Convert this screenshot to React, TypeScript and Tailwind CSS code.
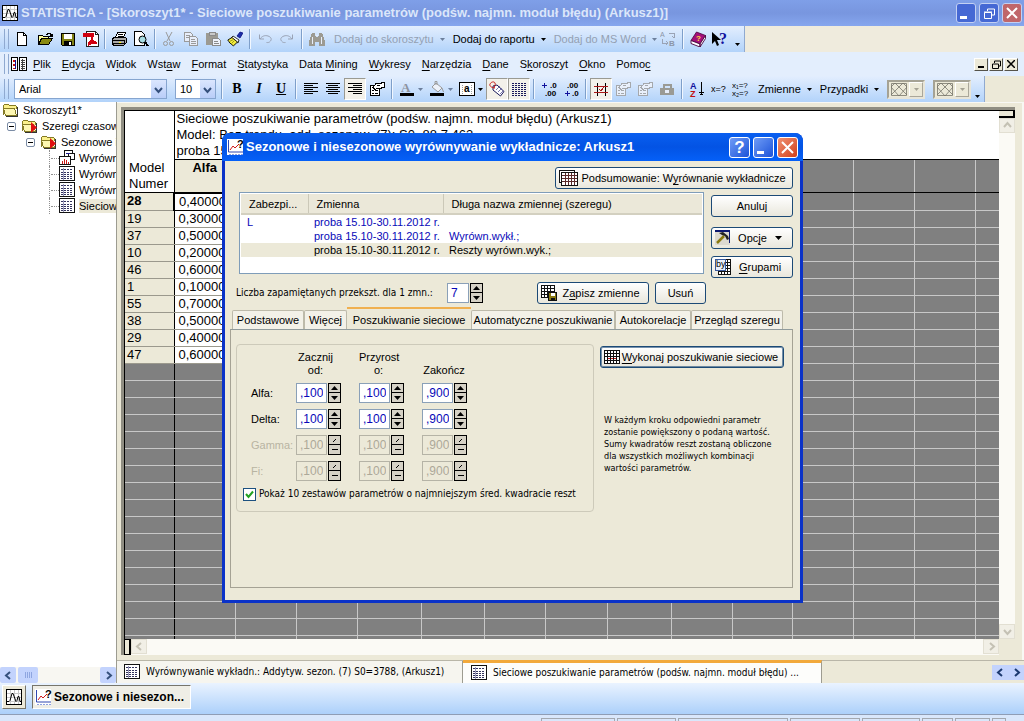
import React from "react";

type Kids = { children?: React.ReactNode };

/* Text with a Windows-style accelerator: the letter after "&" is underlined. */
function Acc({ t }: { t: string }) {
  const i = t.indexOf("&");
  if (i < 0) return <>{t}</>;
  return (
    <span className="whitespace-pre">
      {t.slice(0, i)}
      <span className="underline underline-offset-2">{t[i + 1]}</span>
      {t.slice(i + 2)}
    </span>
  );
}

function Svg({ children, s = 16 }: Kids & { s?: number }) {
  return (
    <svg width={s} height={s} viewBox="0 0 16 16" fill="none" shapeRendering="crispEdges" className="shrink-0" aria-hidden="true">
      {children}
    </svg>
  );
}

const NewIcon = () => (
  <Svg><path d="M3.5 1.5h6l3 3v10h-9z" fill="#fff" stroke="#000" /><path d="M9.5 1.5v3h3" stroke="#000" /></Svg>
);
const OpenIcon = () => (
  <Svg>
    <path d="M1.5 13.5v-9h4l1 1h5v2" fill="#ffff9c" stroke="#000" />
    <path d="M1.5 13.5l3-6h11l-4 6z" fill="#8a8a10" stroke="#000" />
    <path d="M9 3.500h1l1-1h2l1 1v1M12 5.500h3M13 4.500h2M15.500 3v3" stroke="#000" />
  </Svg>
);
const SaveIcon = () => (
  <Svg>
    <path d="M1.500 2.500h13v12h-12l-1-1z" fill="#808012" stroke="#000" />
    <path d="M4 3h8v5h-8z" fill="#fff" /><path d="M4 10h8v4h-8z" fill="#000" /><path d="M9 11h2v3h-2z" fill="#fff" />
  </Svg>
);
const PdfIcon = () => (
  <Svg>
    <path d="M3.500.500h9l3 3v12h-12z" fill="#fff" stroke="#222" />
    <path d="M0 2h11v4H0z" fill="#d00010" />
    <path d="M5 13l3-3 1-4 1 4 4 2H9l-4 2" stroke="#d00010" strokeWidth="1.500" fill="none" />
    <path d="M12.500.500v3h3" stroke="#222" />
  </Svg>
);
const PrintIcon = () => (
  <Svg>
    <path d="M4.500 6.500l2-5h8l-2 5z" fill="#fff" stroke="#000" />
    <path d="M1.500 7.500l2-1h11l1 1v4l-3 3h-10l-1-2z" fill="#a9a9a9" stroke="#000" />
    <path d="M2 9.500h11M2 12.500h11M13.500 9v4M7 3.500h5M6.500 5.500h5" stroke="#000" /><path d="M8 11h2" stroke="#ff0" />
  </Svg>
);
const PreviewIcon = () => (
  <Svg>
    <path d="M1.500.500h7l3 3v11h-10z" fill="#fff" stroke="#000" />
    <circle cx="9.500" cy="8.500" r="3.500" fill="#a8dde4" stroke="#000" shapeRendering="auto" />
    <path d="M12 11l3 4" stroke="#000" strokeWidth="2" />
  </Svg>
);
const CutIcon = () => (
  <Svg>
    <g shapeRendering="auto" stroke="#9a9a9a"><path d="M5 1l4 9M11 1L6 10" /><circle cx="4.500" cy="12.500" r="2" /><circle cx="10.500" cy="12.500" r="2" /></g>
  </Svg>
);
const CopyIcon = () => (
  <Svg>
    <path d="M1.500 1.500h6l2 2v7h-8z" fill="#e8eefa" stroke="#9a9a9a" />
    <path d="M6.500 5.500h6l2 2v7h-8z" fill="#e8eefa" stroke="#9a9a9a" />
    <path d="M3 4.500h4M3 6.500h3M8 8.500h4M8 10.500h5M8 12.500h5" stroke="#9a9a9a" />
  </Svg>
);
const PasteIcon = () => (
  <Svg>
    <path d="M1 2h12v12H1z" fill="#9c9a92" /><path d="M4 1h6v3H4z" fill="#c9c9c9" stroke="#8a8a8a" />
    <path d="M7.500 7.500h6l2 2v5h-8z" fill="#eef2fa" stroke="#8a8a8a" /><path d="M9 10.500h4M9 12.500h5" stroke="#8a8a8a" />
  </Svg>
);
const BrushIcon = () => (
  <Svg>
    <g shapeRendering="auto">
      <path d="M10 5l3-4 3 1-3 5z" fill="#1a2fa8" stroke="#00007a" strokeWidth=".7" />
      <path d="M6 5l6 4-1 3-7-5z" fill="#fff" stroke="#000" strokeWidth=".8" />
      <path d="M5 6.500L.8 9l1 1.500 1 1.500 1.500 1 2 2L10.500 11z" fill="#f3ec3d" stroke="#000" strokeWidth=".9" />
      <path d="M2.500 10.500l4-2M4.500 12.500l3-3" stroke="#8a8a10" strokeWidth=".8" />
    </g>
  </Svg>
);
const UndoIcon = ({ flip = false }: { flip?: boolean }) => (
  <Svg>
    <g stroke="#9aa3b5" transform={flip ? "matrix(-1 0 0 1 16 0)" : undefined} shapeRendering="auto">
      <path d="M2.500 3.500v4.500H7M3 8c2-3 5-4 8-3s4 3 2.500 5-3 1.500-4 1.500" />
    </g>
  </Svg>
);
const BinocIcon = () => (
  <Svg>
    <path d="M3 2h3v2l1 2h2l1-2V2h3l3 8v5h-6v-4H6v4H0v-5z" fill="#9c9a92" />
    <path d="M3.500 6v7M12.500 6v7M7 4.500h2" stroke="#e8eefa" />
  </Svg>
);
const AbIcon = () => (
  <Svg>
    <text x="0" y="6" fontSize="7" fill="#8c96a8" fontFamily="Liberation Sans">A</text>
    <text x="9" y="15" fontSize="8" fontWeight="bold" fill="#8c96a8" fontFamily="Liberation Sans">B</text>
    <path d="M2.500 8v4h5M6 10l2 2-2 2M9 2.500h5v4M12 5l2 2" stroke="#9aa3b5" />
  </Svg>
);
const BookIcon = () => (
  <Svg>
    <g shapeRendering="auto">
      <path d="M6.500 1L15.500 4.500 10 13 1 9.500z" fill="#a3107a" stroke="#4a003a" strokeWidth=".8" />
      <path d="M1 9.500v3l9 3.500v-3zM10 13l5.500-8.500v3L10 16z" fill="#fff" stroke="#4a003a" strokeWidth=".9" />
      <text x="6" y="10" fontSize="8" fontWeight="bold" fill="#ffe13a" fontFamily="Liberation Sans">?</text>
    </g>
  </Svg>
);
const WhatIcon = () => (
  <svg width="18" height="16" viewBox="0 0 18 16" aria-hidden="true">
    <path d="M1 1v12l3-3 2 5 2-1-2-5h4z" fill="#000" />
    <text x="8" y="13" fontSize="16" fontWeight="bold" fill="#10109c" fontFamily="Liberation Serif">?</text>
  </svg>
);
const AlignIcon = ({ k }: { k: "l" | "c" | "r" }) => (
  <Svg>
    <path
      d={
        k === "l"
          ? "M1 2.500h14M1 4.500h9M1 6.500h14M1 8.500h9M1 10.500h14M1 12.500h9"
          : k === "c"
            ? "M1 2.500h14M3 4.500h10M1 6.500h14M3 8.500h10M1 10.500h14M3 12.500h10"
            : "M1 2.500h14M6 4.500h9M1 6.500h14M6 8.500h9M1 10.500h14M6 12.500h9"
      }
      stroke="#000"
    />
  </Svg>
);
const PropsIcon = ({ c = "#000", f = "#fff" }: { c?: string; f?: string }) => (
  <Svg>
    <path d="M1.500 4.500h9v10h-9z" fill={f} stroke={c} />
    <path d="M3 9.500h2M6 9.500h3M3 12.500h2M6 12.500h3" stroke={c} />
    <path d="M4 6.500l3-4h5l1-1h2v5h-2l-1 1H8l-2 1z" fill={f} stroke={c} />
    <path d="M8 4.500h3" stroke={c} />
  </Svg>
);
const FontColorIcon = () => (
  <Svg><text x="2" y="11" fontSize="13" fontWeight="bold" fill="#8d939f" fontFamily="Liberation Serif">A</text><path d="M1 12h14v3H1z" fill="#000" /></Svg>
);
const FillIcon = () => (
  <Svg>
    <g shapeRendering="auto"><path d="M3 6l4-4 6 5-4 4z" fill="#eef2fa" stroke="#9a9a9a" /><path d="M6 4V.500h2V4M13 7l1.500 4" stroke="#9a9a9a" /></g>
    <path d="M1 12h14v3H1z" fill="#000" />
  </Svg>
);
const BoxAIcon = () => (
  <Svg>
    <path d="M.500 1.500h15v13H.500z" fill="#fff" stroke="#000" /><path d="M3.500 3.500v9M12.500 3.500v9" stroke="#999" strokeDasharray="1 1" />
    <text x="5" y="11" fontSize="10" fontWeight="bold" fill="#000" fontFamily="Liberation Sans">a</text>
  </Svg>
);
const TagIcon = () => (
  <Svg>
    <g shapeRendering="auto">
      <path d="M4 5l4-1 7 6.500-3.500 4.500L4 9z" fill="#fff" stroke="#1a1a5c" />
      <path d="M7 9l4-4M9 11l4-4M11 13l3.500-3.500" stroke="#7a78b0" />
      <path d="M6 7C3 7 0 5 1 3s4-3 5-1-1 4-1 5" stroke="#c81e1e" />
    </g>
  </Svg>
);
const DotsIcon = () => (
  <Svg><path d="M1 2.500h14M1 4.500h14M1 6.500h14M1 8.500h14M1 10.500h14M1 12.500h14M1 14.500h14" stroke="#1a1a5c" strokeDasharray="2 1" /></Svg>
);
const DecIcon = ({ add }: { add: boolean }) => (
  <Svg>
    <g fill="#000" fontFamily="Liberation Sans" fontWeight="bold" fontSize="8">
      <text x={add ? 9 : 4} y="7">{add ? ".0" : ".00"}</text>
      <text x={add ? 4 : 9} y="15">{add ? ".00" : ".0"}</text>
    </g>
    <path d={add ? "M1 4.500h5M3.500 2v5" : "M2 12.500h5M4.500 10v5"} stroke="#10109c" />
  </Svg>
);
const CropIcon = () => (
  <Svg>
    <path d="M4.500 2v13M12.500 2v13" stroke="#000" /><path d="M1 5.500h14M1 11.500h14" stroke="#a81818" />
    <path d="M6 8l2 2 3-4" stroke="#a81818" />
  </Svg>
);
const LockIcon = () => (
  <Svg><path d="M4.500 7V3.500h7V7" stroke="#9a9a94" strokeWidth="2" /><path d="M1 7h14v7H1z" fill="#9a9a94" /><circle cx="8" cy="10.500" r="2" fill="#e8eefa" /></Svg>
);
const SortIcon = () => (
  <Svg>
    <g fontFamily="Liberation Sans" fontWeight="bold" fontSize="9"><text x="1" y="8" fill="#10109c">A</text><text x="1" y="16" fill="#c01010">Z</text></g>
    <path d="M12.500 1v13M10 11.500h5M11 13.500h3" stroke="#000" />
  </Svg>
);
const XqIcon = () => (
  <Svg><text x="0" y="11" fontSize="9" fill="#000" fontFamily="Liberation Sans">x=?</text></Svg>
);
const XxIcon = () => (
  <svg width="18" height="16" viewBox="0 0 18 16" aria-hidden="true">
    <g fontSize="8" fill="#000" fontFamily="Liberation Sans"><text x="0" y="7">x₁=?</text><text x="0" y="15">x₂=?</text></g>
  </svg>
);
const PlotIcon = () => (
  <Svg>
    <path d="M.500.500h15v15H.500z" fill="#fff" stroke="#000" />
    <path d="M4.500 1v14M8.500 1v14M12.500 1v14M1 4.500h14M1 8.500h14M1 12.500h14" stroke="#c9c9c9" />
    <path d="M1 12.500h2l1-1 2-7h1l3 8 1-1 1-4h1l1 5h2" stroke="#000" shapeRendering="auto" />
  </Svg>
);
const WorkbookIcon = () => (
  <Svg>
    <path d="M.500 1.500h6v13h-6zM8.500 1.500h7v13h-7z" fill="#fff" stroke="#000" />
    <path d="M2 4h2v2H2zM2 8h2v2H2zM2 12h2v1H2z" fill="#c01010" /><path d="M4.500 4v9" stroke="#10109c" />
    <path d="M10 4.500h4M10 6.500h4M10 8.500h4M10 10.500h4M10 12.500h4" stroke="#444" /><path d="M11.500 3v11" stroke="#444" />
  </Svg>
);
const FolderIcon = ({ mark = false }: { mark?: boolean }) => (
  <Svg>
    <path d="M.500 12.500v-9l1-1h4l1 1h6l1 1v2" fill="#fbf08b" stroke="#857b25" />
    <path d="M2.500 13.500l-2-7h11l2 7z" fill="#fdf7b2" stroke="#857b25" />
    <path d="M14.500 5v9H3" stroke="#333" />
    {mark && <path d="M9 4l6 5.500L9 15z" fill="#e01010" shapeRendering="auto" />}
  </Svg>
);
const SheetIcon = () => (
  <Svg>
    <path d="M.500.500h15v14H.500z" fill="#fff" stroke="#111" />
    <path d="M2 3.500h12M2 6.500h12M2 8.500h12M2 10.500h12M2 12.500h12" stroke="#34345e" strokeDasharray="2 1" /><path d="M4.500 2v12" stroke="#99b" />
  </Svg>
);
const ChartsIcon = () => (
  <Svg>
    <path d="M5.500.500h8v6h-8z" fill="#fff" stroke="#111" /><path d="M9.500 3.500h6v6h-6z" fill="#fff" stroke="#111" />
    <path d="M.500 6.500h11v8H.500z" fill="#fff" stroke="#111" />
    <path d="M3.500 11v3M5.500 9v5M7.500 10v4M9.500 12v2" stroke="#c81818" /><path d="M7 3.500h4" stroke="#18188c" />
  </Svg>
);
const TrendIcon = () => (
  <svg width="18" height="17" viewBox="0 0 18 17" className="shrink-0" aria-hidden="true">
    <path d="M0 0h16v16H0z" fill="#fff" /><path d="M1.500 1v12H16" stroke="#3048b0" fill="none" />
    <path d="M3 11l3-4 2 2 4-4" stroke="#d01818" fill="none" /><path d="M2 15.500h14" stroke="#8fa2e0" strokeDasharray="2 1" />
    <text x="10" y="9" fontSize="11" fontWeight="bold" fill="#000" fontFamily="Liberation Sans">?</text>
  </svg>
);
const GridIcon = () => (
  <Svg>
    <path d="M.500 1.500h15v13H.500z" fill="#fff" stroke="#111" />
    <path d="M3.500 1v14M6.500 1v14M9.500 1v14M12.500 1v14M0 4.500h16M0 7.500h16M0 11.500h16" stroke="#111" />
    <path d="M4 9.500h8" stroke="#c01818" strokeDasharray="2 1" />
  </Svg>
);
const StackGridIcon = () => (
  <svg width="19" height="16" viewBox="0 0 19 16" fill="none" shapeRendering="crispEdges" className="shrink-0" aria-hidden="true">
    <path d="M.500.500h15v12H.500z" fill="#fff" stroke="#111" /><path d="M2.500 2.500h16v13h-16z" fill="#fff" stroke="#111" />
    <path d="M6.500 3v12M9.500 3v12M12.500 3v12M15.500 3v12M3 5.500h15M3 8.500h15M3 11.500h15" stroke="#5a2a2a" />
  </svg>
);
const SaveGridIcon = () => (
  <Svg>
    <path d="M.500.500h13v12H.500z" fill="#fff" stroke="#111" />
    <path d="M3.500 1v12M6.500 1v12M9.500 1v12M0 3.500h13M0 6.500h13M0 9.500h13" stroke="#111" />
    <path d="M7.500 7.500h8v8h-8z" fill="#8a7a10" stroke="#111" /><path d="M10 8h4v3h-4z" fill="#fff" /><path d="M10 13h4v3h-4z" fill="#111" />
  </Svg>
);
const HammerIcon = () => (
  <Svg>
    <path d="M0 0h15v15H0z" fill="#dcd9d0" /><path d="M0 0h15v2H0zM14 0h1v13h-1z" fill="#0c1770" />
    <g shapeRendering="auto"><path d="M2 13l7-7" stroke="#8a7a10" strokeWidth="2.500" /><path d="M4 3l4-1 5 4 1 3-2 1-2-4-3-1z" fill="#222" /></g>
  </Svg>
);
const ByIcon = () => (
  <Svg>
    <path d="M3.500 0.500h12v15h-12z" fill="#fff" stroke="#111" />
    <path d="M12.500 0v16M3 12.500h13M6.500 11v5M9.500 11v5M11 3.500h5M11 6.500h5M11 9.500h5" stroke="#111" />
    <path d="M.500.500h10v11H.500z" fill="#e9f0fc" stroke="#3a5a9c" />
    <text x="1" y="8" fontSize="9" fill="#000" fontFamily="Liberation Sans">by</text>
  </Svg>
);

function Tool({ label, on = false, off = false, children }: Kids & { label: string; on?: boolean; off?: boolean }) {
  return (
    <button
      aria-label={label}
      disabled={off}
      className={`flex h-[22px] w-[22px] shrink-0 items-center justify-center ${on ? "border border-[#9a9a92] border-r-white border-b-white bg-[#f3f1ea]" : ""}`}
    >
      {children}
    </button>
  );
}
const Sep = ({ wide = false }: { wide?: boolean }) => (
  <span className={`h-5 w-0.5 shrink-0 border-l border-l-[#7e9fca] bg-[#f1f7ff] ${wide ? "mx-[3px]" : "mx-0.5"}`} />
);
const Grip = () => <span className="mr-0.5 ml-1 h-5 w-[5px] shrink-0 border-x border-[#8fa9d0]" />;
const Down = ({ c = "#000" }: { c?: string }) => (
  <svg width="5" height="3" viewBox="0 0 5 3" className="shrink-0" aria-hidden="true"><path d="M0 0h5L2.500 3z" fill={c} /></svg>
);
function TextTool({ t, off = false }: { t: string; off?: boolean }) {
  return (
    <button disabled={off} className={`flex shrink-0 items-center gap-1.5 whitespace-nowrap ${off ? "text-[#94a0b2]" : ""}`}>
      {t}
      <Down c={off ? "#6c7f9c" : "#000"} />
    </button>
  );
}
const bar = "flex items-center bg-linear-to-b from-[#e3eefe] to-[#b2d3fa]";

function Chevron({ dir, c = "#35507c" }: { dir: "l" | "r" | "u" | "d"; c?: string }) {
  const d = { l: "M6 1L2 4.500 6 8", r: "M3 1l4 3.500L3 8", u: "M1 6l3.500-4L8 6", d: "M1 3l3.500 4L8 3" }[dir];
  return <svg width="9" height="9" viewBox="0 0 9 9" aria-hidden="true"><path d={d} fill="none" stroke={c} strokeWidth="2" /></svg>;
}

function Combo({ label, value, cls }: { label: string; value: string; cls: string }) {
  return (
    <div className={`flex h-5 shrink-0 items-center border border-[#86a5cf] bg-white ${cls}`}>
      <select aria-label={label} className="min-w-0 flex-1 appearance-none bg-white pl-1 text-[11px] outline-none">
        <option>{value}</option>
      </select>
      <span className="flex h-[18px] w-[15px] items-center justify-center bg-linear-to-b from-[#dbe6fe] to-[#b9cdf8]"><Chevron dir="d" /></span>
    </div>
  );
}

function PatternCombo({ label }: { label: string }) {
  return (
    <button aria-label={label} disabled className="flex h-[19px] w-[38px] shrink-0 items-center justify-between border-2 border-[#a5a294] border-r-[#e8e5d8] border-b-[#e8e5d8] bg-[#ece9d8] pl-0.5">
      <svg width="16" height="13" viewBox="0 0 16 13" fill="none" stroke="#77756b" aria-hidden="true">
        <path d="M.500.500h15v12H.500zM4 0l12 12M12 0L0 12M0 4l8 9M16 4l-8 9M0 4l4-4M16 4l-4-4" strokeWidth=".8" />
      </svg>
      <span className="flex h-[15px] w-[14px] items-center justify-center border border-[#fff] border-r-[#aaa79a] border-b-[#aaa79a]"><Down c="#a5a294" /></span>
    </button>
  );
}

const menus = ["&Plik", "&Edycja", "W&idok", "Wst&aw", "&Format", "&Statystyka", "Data &Mining", "&Wykresy", "&Narzędzia", "&Dane", "S&koroszyt", "&Okno", "Pomo&c"];

const modelRows: [string, string][] = [
  ["28", "0,400000"], ["19", "0,300000"], ["37", "0,500000"], ["10", "0,200000"], ["46", "0,600000"],
  ["1", "0,100000"], ["55", "0,700000"], ["38", "0,500000"], ["29", "0,400000"], ["47", "0,600000"],
];
const colWidths = [49, 61, 61, 61, 64, 63, 61, 62, 64, 61, 60, 61, 61, 61, 61];
const spare = colWidths.slice(2);

function Sheet() {
  return (
    <table className="w-[911px] shrink-0 table-fixed border-collapse text-[13px] leading-4">
      <colgroup>{colWidths.map((w, i) => <col key={i} style={{ width: w }} />)}</colgroup>
      <thead className="text-left font-normal">
        <tr className="h-[48px]">
          <th rowSpan={2} className="border-r border-b border-black bg-white p-0 pl-1 align-bottom font-normal">Model<br />Numer</th>
          <th colSpan={14} className="border-b border-black bg-white p-0 pl-0.5 align-top font-normal whitespace-nowrap">
            Sieciowe poszukiwanie parametrów (podśw. najmn. moduł błędu) (Arkusz1)<br />
            Model: Bez trendu, add. sezonow. (7); S0=88 7,463<br />
            proba 15.10-30.11.2012 r.
          </th>
        </tr>
        <tr className="h-[33px]">
          <th className="border-b border-black bg-[#ece9d8] text-center align-top font-bold">Alfa</th>
          {spare.map((_, i) => <th key={i} className="border-r border-b border-r-[#c8c8c8] border-b-black" />)}
        </tr>
      </thead>
      <tbody>
        {modelRows.map(([n, v], r) => (
          <tr key={n} className="h-[17px]">
            <th className={`border-r border-b border-r-black border-b-[#9b998d] bg-[#ece9d8] p-0 pl-0.5 text-left ${r ? "font-normal" : "font-bold"}`}>{n}</th>
            <td className={`border-b bg-white p-0 pl-1 ${r ? "border-[#9b998d]" : "border-2 border-black"}`}>{v}</td>
            {spare.map((_, i) => <td key={i} className="border-r border-b border-[#c8c8c8] p-0" />)}
          </tr>
        ))}
        {Array.from({ length: 17 }, (_, r) => (
          <tr key={r} className="h-[17px]">
            <td className="border-r border-b border-r-black border-b-[#c8c8c8] p-0" />
            {colWidths.slice(1).map((_, i) => <td key={i} className="border-r border-b border-[#c8c8c8] p-0" />)}
          </tr>
        ))}
      </tbody>
    </table>
  );
}

function Fold() {
  return <span className="flex h-[9px] w-[9px] shrink-0 items-center justify-center rounded-xs border border-[#7b8ca5] bg-white"><span className="h-px w-[5px] bg-black" /></span>;
}
function Leaf({ t, icon, sel = false }: { t: string; icon: React.ReactNode; sel?: boolean }) {
  return (
    <li className="flex h-4 items-center gap-1">
      <span className="flex items-center self-stretch border-l border-dotted border-[#909090] pl-px"><span className="w-2 border-t border-dotted border-[#909090]" />{icon}</span>
      <span className={sel ? "bg-[#ece9d8]" : ""}>{t}</span>
    </li>
  );
}

function Tree() {
  return (
    <nav aria-label="Skoroszyt" className="flex w-[117px] shrink-0 flex-col overflow-hidden border-r border-[#9d9c91] bg-white">
      <ul className="flex-1 overflow-hidden whitespace-nowrap">
        <li className="flex h-4 items-center gap-1 pl-[3px]"><FolderIcon />Skoroszyt1*</li>
        <li className="flex h-4 items-center gap-1 pl-[7px]"><Fold /><span className="-ml-0.5 w-1 border-t border-dotted border-[#909090]" /><FolderIcon mark />Szeregi czasowe</li>
        <li className="flex h-4 items-center gap-1 pl-[26px]"><Fold /><span className="-ml-0.5 w-1 border-t border-dotted border-[#909090]" /><FolderIcon mark />Sezonowe i niesezonowe</li>
        <li className="pl-[49px]">
          <ul>
            <Leaf t="Wyrównywanie" icon={<ChartsIcon />} />
            <Leaf t="Wyrównywanie" icon={<SheetIcon />} />
            <Leaf t="Wyrównywanie" icon={<SheetIcon />} />
            <Leaf t="Sieciowe" icon={<SheetIcon />} sel />
          </ul>
        </li>
      </ul>
      <div className="flex h-4 items-center justify-between bg-[#f8f7f2]">
        <div className="flex">
          <button aria-label="Przewiń w lewo" className="flex h-4 w-4 items-center justify-center rounded-xs bg-[#c3d3fd]"><Chevron dir="l" /></button>
          <span className="ml-0.5 flex h-4 w-5 items-center justify-center gap-px rounded-xs bg-[#c3d3fd]">
            {[0, 1, 2, 3].map((i) => <span key={i} className="h-1.5 w-px bg-[#8fa6e0]" />)}
          </span>
        </div>
        <button aria-label="Przewiń w prawo" className="flex h-4 w-4 items-center justify-center rounded-xs bg-[#c3d3fd]"><Chevron dir="r" /></button>
      </div>
    </nav>
  );
}

function Btn({ icon, children, cls = "" }: Kids & { icon?: React.ReactNode; cls?: string }) {
  return (
    <button className={`flex h-[22px] shrink-0 items-center rounded-[3px] border border-[#1c4a76] bg-linear-to-b from-white to-[#e9e7dc] px-[3px] whitespace-nowrap ${cls}`}>
      {icon}
      <span className="flex-1 text-center">{children}</span>
    </button>
  );
}

function Spin({ label, value, off = false, w = "w-[31px]", id }: { label: string; value: string; off?: boolean; w?: string; id?: string }) {
  const b = "flex h-2.5 w-[13px] items-center justify-center border border-black bg-[#d6d2c6]";
  return (
    <div className="flex items-center gap-px">
      <input
        id={id}
        aria-label={id ? undefined : label}
        defaultValue={value}
        disabled={off}
        className={`h-5 border px-[3px] text-[12px] ${w} ${off ? "border-[#b5b3a6] bg-[#ece9d8] text-[#aca899]" : "border-[#8aa0b8] bg-white text-[#0808b8]"}`}
      />
      <div className="flex flex-col">
        <button aria-label={`${label} więcej`} disabled={off} className={b}>
          <svg width="7" height="4" viewBox="0 0 7 4" aria-hidden="true"><path d={off ? "M2 4l3-3" : "M0 4h7L3.500 0z"} fill="#000" stroke={off ? "#000" : "none"} /></svg>
        </button>
        <button aria-label={`${label} mniej`} disabled={off} className={`${b} border-t-0`}>
          <svg width="7" height="4" viewBox="0 0 7 4" aria-hidden="true"><path d={off ? "M1 1.500h6" : "M0 0h7L3.500 4z"} fill="#000" stroke={off ? "#000" : "none"} /></svg>
        </button>
      </div>
    </div>
  );
}

const tabs: [string, string][] = [
  ["Podstawowe", "w-[72px]"], ["Więcej", "w-[43px]"], ["Poszukiwanie sieciowe", "w-[124px]"],
  ["Automatyczne poszukiwanie", "w-[144px]"], ["Autokorelacje", "w-[76px]"], ["Przegląd szeregu", "w-[92px]"],
];
const params: [string, boolean][] = [["Alfa:", false], ["Delta:", false], ["Gamma:", true], ["Fi:", true]];

function Dialog() {
  const cap = "flex h-[21px] w-[21px] items-center justify-center rounded-[3px] border border-white";
  return (
    <section role="dialog" aria-label="Sezonowe i niesezonowe wyrównywanie wykładnicze" className="absolute top-[133px] left-[222px] flex h-[470px] w-[581px] flex-col rounded-t-lg bg-[#0a32c8] p-[3px] pt-0">
      <header className="-mx-[3px] flex h-7 items-center gap-px rounded-t-lg bg-linear-to-b from-[#0a5ff0] via-[#0353e4] to-[#0560f8] px-[5px] text-white">
        <TrendIcon />
        <h2 className="flex-1 text-[13px] font-bold whitespace-nowrap">Sezonowe i niesezonowe wyrównywanie wykładnicze: Arkusz1</h2>
        <div className="flex gap-[3px]">
          <button aria-label="Pomoc" className={`${cap} bg-linear-to-br from-[#6f9bf6] to-[#1d51d8] text-[17px] leading-none font-bold`}>?</button>
          <button aria-label="Minimalizuj" className={`${cap} bg-linear-to-br from-[#6f9bf6] to-[#1d51d8]`}><span className="mt-2.5 mr-1.5 h-[3px] w-[7px] bg-white" /></button>
          <button aria-label="Zamknij" className={`${cap} bg-linear-to-br from-[#f09070] to-[#d03c14]`}>
            <svg width="13" height="13" viewBox="0 0 13 13" aria-hidden="true"><path d="M1 1l11 11M12 1L1 12" stroke="#fff" strokeWidth="2" /></svg>
          </button>
        </div>
      </header>
      <div className="flex flex-1 flex-col bg-[#ece9d8] px-[7px] pt-1.5">
        <div className="flex justify-end"><Btn icon={<StackGridIcon />} cls="w-[238px]"><Acc t="Podsumowanie: W&yrównanie wykładnicze" /></Btn></div>
        <div className="mt-[3px] flex gap-[7px] pl-[7px]">
          <div className="h-[82px] flex-1 border border-[#7f9db9] bg-white px-px pt-px">
            <table className="w-full table-fixed border-collapse text-left leading-[14px] whitespace-nowrap">
              <colgroup><col className="w-[67px]" /><col className="w-[135px]" /><col /></colgroup>
              <thead className="bg-[#ebe8d9]">
                <tr className="h-5 border-b-2 border-[#d3d0c0]">
                  <th className="border-r border-[#cbc8b8] p-0 pl-2 font-normal">Zabezpi...</th>
                  <th className="border-r border-[#cbc8b8] p-0 pl-2 font-normal">Zmienna</th>
                  <th className="p-0 pl-2 font-normal">Długa nazwa zmiennej (szeregu)</th>
                </tr>
              </thead>
              <tbody>
                <tr className="text-[#0808b8]"><td className="p-0 pl-1.5">L</td><td className="p-0 pl-1.5">proba 15.10-30.11.2012 r.</td><td /></tr>
                <tr className="text-[#0808b8]"><td /><td className="p-0 pl-1.5">proba 15.10-30.11.2012 r.</td><td className="p-0 pl-1.5">Wyrówn.wykł.;</td></tr>
                <tr className="bg-[#ece9d8]"><td /><td className="p-0 pl-1.5">proba 15.10-30.11.2012 r.</td><td className="p-0 pl-1.5">Reszty wyrówn.wyk.;</td></tr>
              </tbody>
            </table>
          </div>
          <div className="flex w-[82px] flex-col pt-[3px]">
            <Btn>Anuluj</Btn>
            <Btn icon={<HammerIcon />} cls="mt-2.5">
              <span className="flex items-center justify-center gap-2"><Acc t="Opc&je" /><svg width="7" height="4" viewBox="0 0 7 4" aria-hidden="true"><path d="M0 0h7L3.500 4z" /></svg></span>
            </Btn>
            <Btn icon={<ByIcon />} cls="mt-[7px]"><Acc t="&Grupami" /></Btn>
          </div>
        </div>
        <div className="mt-1 flex items-center pl-1">
          <label htmlFor="saved" className="w-[211px] font-['DejaVu_Sans_Condensed',sans-serif] text-[10px] whitespace-nowrap">Liczba zapamiętanych przekszt. dla 1 zmn.:</label>
          <Spin id="saved" label="Liczba przekształceń" value="7" w="w-[22px]" />
          <Btn icon={<SaveGridIcon />} cls="ml-[54px] w-[112px]"><Acc t="Z&apisz zmienne" /></Btn>
          <Btn cls="ml-1.5 w-[51px]">Usuń</Btn>
        </div>
        <div role="tablist" className="mt-[3px] flex h-[22px] items-end">
          {tabs.map(([t, w], i) => (
            <button
              key={t}
              role="tab"
              aria-selected={i === 2}
              className={`shrink-0 whitespace-nowrap ${w} ${i === 2 ? "h-[22px] border-t-2 border-[#f0b050] pt-0.5" : "h-[19px] rounded-t-xs border border-b-0 border-[#bdbaaa] bg-[#f3f1e8]"}`}
            >
              {t}
            </button>
          ))}
        </div>
        <div role="tabpanel" className="-ml-0.5 mb-3 flex flex-1 gap-1.5 border border-[#a5a294] border-t-[#919b9c] pt-3.5 pl-[5px]">
          <fieldset className="h-[168px] w-[358px] min-w-0 shrink-0 rounded-sm border border-[#cdcaba] pl-1.5">
            <legend className="sr-only">Parametry</legend>
            <div className="grid grid-cols-[45px_63px_63px_63px] items-center gap-y-1.5 pt-1.5 pl-2">
              <span />
              <span className="pr-6 text-center leading-[13px]">Zacznij<br />od:</span>
              <span className="pr-6 text-center leading-[13px]">Przyrost<br />o:</span>
              <span className="self-end pr-[19px] text-center leading-[13px]">Zakończ</span>
              {params.map(([p, off]) => (
                <React.Fragment key={p}>
                  <span className={off ? "text-[#b8b4a2]" : ""}>{p}</span>
                  <Spin label={`${p} od`} value=",100" off={off} />
                  <Spin label={`${p} przyrost`} value=",100" off={off} />
                  <Spin label={`${p} do`} value=",900" off={off} />
                </React.Fragment>
              ))}
            </div>
            <label className="mt-1.5 flex items-center gap-[3px] font-['DejaVu_Sans_Condensed',sans-serif] text-[10px] whitespace-nowrap">
              <input type="checkbox" defaultChecked className="peer sr-only" />
              <span className="flex h-[13px] w-[13px] shrink-0 items-center justify-center border border-[#1c5180] bg-white">
                <svg width="9" height="9" viewBox="0 0 9 9" aria-hidden="true"><path d="M1 4l2.500 3L8 1.500" fill="none" stroke="#21a121" strokeWidth="2" /></svg>
              </span>
              Pokaż 10 zestawów parametrów o najmniejszym śred. kwadracie reszt
            </label>
          </fieldset>
          <div className="flex flex-1 flex-col pt-0.5">
            <Btn icon={<GridIcon />} cls="w-[184px] ring-1 ring-inset ring-[#1c4a76]/60"><Acc t="&Wykonaj poszukiwanie sieciowe" /></Btn>
            <p className="mt-[46px] pl-1 font-['DejaVu_Sans_Condensed',sans-serif] text-[9px] leading-3 whitespace-nowrap">
              W każdym kroku odpowiedni parametr<br />zostanie powiększony o podaną wartość.<br />Sumy kwadratów reszt zostaną obliczone<br />dla wszystkich możliwych kombinacji<br />wartości parametrów.
            </p>
          </div>
        </div>
      </div>
    </section>
  );
}

export default function App() {
  const cap = "flex h-5 w-5 items-center justify-center rounded-[3px] border border-[#c3d0f3]";
  const mdi = "flex h-[13px] w-[14px] items-center justify-center border border-white border-r-[#55534a] border-b-[#55534a] bg-[#ece9d8]";
  const scr = "flex h-[15px] w-4 items-center justify-center border border-[#e2dfd2] bg-[#f1efe6]";
  return (
    <div className="relative flex h-screen flex-col overflow-hidden bg-[#ece9d8] font-['Liberation_Sans',Arial,sans-serif] text-[11px] leading-[14px] text-black">
      <header className="flex h-[26px] shrink-0 items-center gap-[3px] bg-linear-to-b from-[#7f9fe8] via-[#7896df] to-[#86a6ee] px-0.5">
        <PlotIcon />
        <h1 className="flex-1 truncate text-[13px] font-bold text-[#dbe6fa]">STATISTICA - [Skoroszyt1* - Sieciowe poszukiwanie parametrów (podśw. najmn. moduł błędu) (Arkusz1)]</h1>
        <div className="flex gap-[3px]">
          <button aria-label="Minimalizuj" className={`${cap} bg-[#4568d4]`}><span className="mt-2 mr-1.5 h-[3px] w-[7px] bg-white" /></button>
          <button aria-label="Przywróć" className={`${cap} bg-[#4568d4]`}>
            <svg width="11" height="11" viewBox="0 0 11 11" fill="none" stroke="#fff" aria-hidden="true"><path d="M3.500 3V1h7v6H8M.500 4.500h7v6h-7zM0 4h8" /></svg>
          </button>
          <button aria-label="Zamknij" className={`${cap} bg-[#c0666a]`}>
            <svg width="12" height="12" viewBox="0 0 12 12" aria-hidden="true"><path d="M1 1l10 10M11 1L1 11" stroke="#fff" strokeWidth="2" /></svg>
          </button>
        </div>
      </header>

      <div className="flex h-[26px] shrink-0 bg-[#efebdd]">
        <div role="toolbar" aria-label="Standardowy" className={`${bar} border-r border-[#8fa9d0] pr-1`}>
          <Grip />
          <div className="flex gap-px">
            <Tool label="Nowy"><NewIcon /></Tool><Tool label="Otwórz"><OpenIcon /></Tool><Tool label="Zapisz"><SaveIcon /></Tool><Tool label="PDF"><PdfIcon /></Tool>
          </div>
          <Sep />
          <Tool label="Drukuj"><PrintIcon /></Tool><Tool label="Podgląd"><PreviewIcon /></Tool>
          <Sep />
          <Tool label="Wytnij" off><CutIcon /></Tool><Tool label="Kopiuj" off><CopyIcon /></Tool><Tool label="Wklej" off><PasteIcon /></Tool><Tool label="Malarz formatów"><BrushIcon /></Tool>
          <Sep wide />
          <Tool label="Cofnij" off><UndoIcon /></Tool><Tool label="Ponów" off><UndoIcon flip /></Tool>
          <Sep wide />
          <Tool label="Znajdź" off><BinocIcon /></Tool>
          <div className="flex gap-2 pl-1.5">
            <TextTool t="Dodaj do skoroszytu" off />
            <TextTool t="Dodaj do raportu" />
            <TextTool t="Dodaj do MS Word" off />
          </div>
          <Tool label="Zamień" off><AbIcon /></Tool>
          <Sep wide />
          <Tool label="Pomoc"><BookIcon /></Tool><Tool label="Co to jest"><WhatIcon /></Tool>
          <button aria-label="Opcje paska" className="self-end pb-1.5 pl-1"><Down /></button>
        </div>
      </div>

      <div className="flex h-6 shrink-0 items-center bg-[#e3eefd]">
        <Grip />
        <WorkbookIcon />
        <nav aria-label="Menu" className="flex flex-1 gap-[11px] pl-1.5 whitespace-nowrap">
          {menus.map((m) => <button key={m}><Acc t={m} /></button>)}
        </nav>
        <div className="flex gap-px pr-1.5">
          <button aria-label="Minimalizuj arkusz" className={mdi}><span className="mt-1.5 h-0.5 w-1.5 bg-black" /></button>
          <button aria-label="Przywróć arkusz" className={mdi}><svg width="9" height="9" viewBox="0 0 9 9" fill="none" stroke="#000" aria-hidden="true"><path d="M2.500 3V1h6v5H7M.500 4h6v4.500h-6z" /></svg></button>
          <button aria-label="Zamknij arkusz" className={mdi}><svg width="8" height="8" viewBox="0 0 8 8" aria-hidden="true"><path d="M0 0l8 8M8 0L0 8" stroke="#000" strokeWidth="1.500" /></svg></button>
        </div>
      </div>

      <div className="flex h-[26px] shrink-0 bg-[#ece9d8]">
        <div role="toolbar" aria-label="Formatowanie" className={`${bar} border-r border-[#8fa9d0]`}>
          <Grip />
          <Combo label="Czcionka" value="Arial" cls="ml-[3px] w-[153px]" />
          <Combo label="Rozmiar" value="10" cls="mr-0.5 ml-2 w-[41px]" />
          <Sep wide />
          <div className="flex font-['Liberation_Serif',serif] text-[14px] font-bold">
            <Tool label="Pogrubienie">B</Tool><Tool label="Kursywa"><i>I</i></Tool><Tool label="Podkreślenie"><u>U</u></Tool>
          </div>
          <Sep wide />
          <Tool label="Do lewej"><AlignIcon k="l" /></Tool><Tool label="Do środka"><AlignIcon k="c" /></Tool><Tool label="Do prawej" on><AlignIcon k="r" /></Tool><Tool label="Właściwości"><PropsIcon /></Tool>
          <Sep wide />
          <Tool label="Kolor czcionki" off><FontColorIcon /></Tool><span className="mr-[3px]"><Down c="#6c7f9c" /></span>
          <Tool label="Kolor tła" off><FillIcon /></Tool><span className="mr-[3px]"><Down c="#6c7f9c" /></span>
          <Tool label="Obramowanie"><BoxAIcon /></Tool><span className="mr-[3px]"><Down /></span>
          <Tool label="Etykiety" on><TagIcon /></Tool><Tool label="Siatka" on><DotsIcon /></Tool>
          <Sep wide />
          <Tool label="Zwiększ liczbę miejsc"><DecIcon add /></Tool><Tool label="Zmniejsz liczbę miejsc"><DecIcon add={false} /></Tool>
          <Sep wide />
          <Tool label="Zaznacz" on><CropIcon /></Tool>
          <Tool label="Format" off><PropsIcon c="#a5a8ac" f="#e9f0fb" /></Tool><Tool label="Styl" off><PropsIcon c="#a5a8ac" f="#e9f0fb" /></Tool><Tool label="Blokada" off><LockIcon /></Tool>
          <Sep wide />
          <Tool label="Sortuj"><SortIcon /></Tool><Tool label="Formuła"><XqIcon /></Tool><Tool label="Formuły"><XxIcon /></Tool>
          <div className="flex items-center gap-2 pl-1.5">
            <TextTool t="Zmienne" /><TextTool t="Przypadki" /><PatternCombo label="Wzór 1" /><PatternCombo label="Wzór 2" />
          </div>
          <button aria-label="Opcje formatowania" className="self-end px-1 pb-1"><Down /></button>
        </div>
      </div>

      <main className="flex min-h-0 flex-1">
        <Tree />
        <div className="flex min-w-0 flex-1 flex-col">
          <div className="flex min-h-0 flex-1 flex-col border-t border-r-2 border-[#f8f8f4] bg-[#ece9d8] pt-1 pr-[7px] pb-[5px] pl-1">
            <div className="flex min-h-0 flex-1 flex-col border-t-3 border-l-3 border-[#8f8d82]">
              <div className="flex min-h-0 flex-1">
                <div className="flex min-w-0 flex-1 items-start overflow-hidden border-t border-l border-black bg-[#808080]"><Sheet /></div>
                <div className="flex w-4 shrink-0 flex-col bg-[#fbfaf5]">
                  <span className="h-2 border-2 border-t border-l-0 border-black bg-[#ece9d8]" />
                  <button aria-label="W górę" className={scr}><Chevron dir="u" c="#c4c1b4" /></button>
                  <span className="flex-1" />
                  <button aria-label="W dół" className={scr}><Chevron dir="d" c="#c4c1b4" /></button>
                </div>
              </div>
              <div className="flex h-4 shrink-0 bg-[#fbfaf5]">
                <span className="w-[7px] border border-r-2 border-black bg-[#ece9d8]" />
                <button aria-label="W lewo" className={scr}><Chevron dir="l" c="#c4c1b4" /></button>
                <span className="flex-1" />
                <button aria-label="W prawo" className={scr}><Chevron dir="r" c="#c4c1b4" /></button>
                <span className="w-4 bg-[#ece9d8]" />
              </div>
            </div>
          </div>
          <div role="tablist" className="flex h-[23px] shrink-0 items-end border-t border-[#b9b6a8] font-['DejaVu_Sans_Condensed',sans-serif] text-[10px] whitespace-nowrap">
            <button role="tab" aria-selected={false} className="flex h-[22px] w-[346px] shrink-0 items-center gap-1.5 border-r border-[#9d9c91] bg-[#f6f5ef] pl-[7px]"><SheetIcon />Wyrównywanie wykładn.: Addytyw. sezon. (7) S0=3788, (Arkusz1)</button>
            <button role="tab" aria-selected className="-mt-px flex h-[23px] w-[359px] shrink-0 items-center gap-1.5 border-t-3 border-r border-t-[#f2a93b] border-r-[#9d9c91] bg-[#fdfdfb] pl-2"><SheetIcon />Sieciowe poszukiwanie parametrów (podśw. najmn. moduł błędu) ...</button>
            <div className="mb-[3px] ml-auto flex h-[15px] w-8 items-center justify-around bg-[#c3d3fd]">
              <button aria-label="Poprzedni"><Chevron dir="l" c="#1c3a70" /></button><button aria-label="Następny"><Chevron dir="r" c="#1c3a70" /></button>
            </div>
          </div>
        </div>
      </main>

      <div className="flex h-[31px] shrink-0 items-start gap-1.5 bg-linear-to-b from-[#eaf3ff] to-[#acd0fa] pt-0.5 pl-0.5">
        <button aria-label="STATISTICA" className="flex h-6 w-6 items-center justify-center border border-white border-r-[#77756b] border-b-[#77756b] bg-[#ece9d8]"><PlotIcon /></button>
        <button className="flex h-6 w-[159px] items-center gap-px border border-[#77756b] border-r-white border-b-white bg-[#efeee6] pl-0.5 text-[12px] font-bold whitespace-nowrap"><TrendIcon />Sezonowe i niesezon...</button>
      </div>
      <footer className="flex h-[7px] shrink-0 justify-end gap-0.5 border-t border-[#8f9db5] bg-[#d9e7fb] pt-[3px] pr-[18px]">
        <span className="w-[74px] border border-b-0 border-[#a3a8b0]" />
        <span className="w-[59px] border border-b-0 border-[#a3a8b0]" />
        <span className="w-[110px] border border-b-0 border-[#a3a8b0]" />
        <span className="w-[70px] border border-b-0 border-[#a3a8b0]" />
        <span className="w-[58px] border border-b-0 border-[#a3a8b0]" />
        <span className="w-[31px] border border-b-0 border-[#a3a8b0]" />
        <span className="w-[35px] border border-b-0 border-[#a3a8b0]" />
        <span className="w-[14px] border border-b-0 border-[#a3a8b0]" />
      </footer>
      <Dialog />
    </div>
  );
}
